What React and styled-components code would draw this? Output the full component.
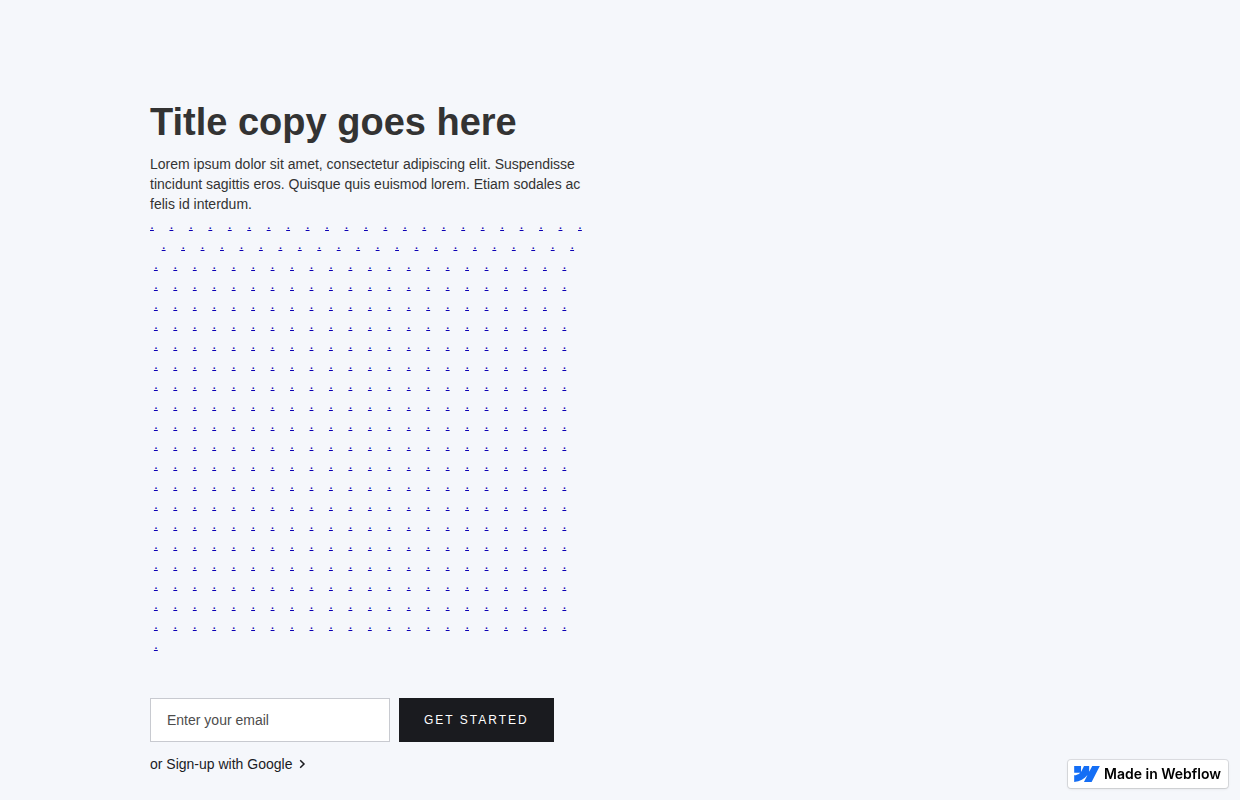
import React, { Fragment, useState } from "react";
import styled, { createGlobalStyle } from "styled-components";

const GlobalStyle = createGlobalStyle`
  * {
    box-sizing: border-box;
  }

  body {
    margin: 0;
    background-color: #f5f7fb;
    color: #333;
    font-family: "Liberation Sans", Arial, sans-serif;
    font-size: 14px;
    line-height: 20px;
  }
`;

const Section = styled.section`
  padding: 100px 24px 24px;
`;

const Container = styled.div`
  display: grid;
  grid-template-columns: 1fr 1fr;
  column-gap: 70px;
  max-width: 940px;
  margin: 0 auto;
`;

const Title = styled.h1`
  margin: 0 0 10px;
  font-size: 38px;
  line-height: 44px;
  font-weight: bold;
`;

const Copy = styled.p`
  margin: 0;
`;

const Dots = styled.div`
  margin-bottom: 44px;
`;

const DotLink = styled.a`
  color: #0c00b4;
  text-decoration: underline;
`;

const SignupForm = styled.form`
  display: flex;
  align-items: stretch;
  gap: 9px;
  margin-bottom: 12px;
`;

const EmailInput = styled.input`
  width: 240px;
  height: 44px;
  padding: 8px 16px;
  border: 1px solid #c8cad0;
  border-radius: 0;
  background-color: #fff;
  color: #333;
  font: inherit;

  &::placeholder {
    color: #4d4d4d;
    opacity: 1;
  }
`;

const SubmitButton = styled.button`
  padding: 11px 24px;
  border: 1px solid #1a1b1f;
  background-color: #1a1b1f;
  color: #fff;
  font-family: inherit;
  font-size: 12px;
  line-height: 20px;
  letter-spacing: 2px;
  text-transform: uppercase;
  white-space: nowrap;
  cursor: pointer;
`;

const GoogleLink = styled.a`
  display: inline-flex;
  align-items: center;
  gap: 6px;
  color: #1a1b1f;
  text-decoration: none;
`;

const Badge = styled.a`
  position: fixed;
  right: 12px;
  bottom: 12px;
  display: flex;
  align-items: center;
  gap: 4px;
  height: 28px;
  padding: 6px 7px 6px 6px;
  border-radius: 3px;
  background-color: #fff;
  box-shadow: 0 0 0 1px rgba(0, 0, 0, 0.1), 0 1px 3px rgba(0, 0, 0, 0.1);
  color: #000;
  font-family: Inter, sans-serif;
  font-size: 14px;
  line-height: 16px;
  font-weight: 600;
  text-decoration: none;
  white-space: nowrap;
`;

const dots = Array.from({ length: 464 }, (_, i) => i);

const Chevron = () => (
  <svg width="8" height="10" viewBox="0 0 8 10" fill="none" aria-hidden="true">
    <path d="M2.2 1.2L6 5L2.2 8.8" stroke="#1a1b1f" strokeWidth="1.5" />
  </svg>
);

const WebflowLogo = () => (
  <svg width="26" height="16" viewBox="0 0 1080 674" aria-hidden="true">
    <path
      fill="#146ef5"
      fillRule="evenodd"
      d="M1080 0L735.386 673.684H411.695L555.916 394.481H549.445C430.464 548.934 252.942 650.61 0 673.684V398.344C0 398.344 161.813 388.787 256.938 288.776H0V0H288.771V237.515L295.252 237.489L413.254 0H631.644V236.009L638.126 235.999L760.555 0H1080Z"
    />
  </svg>
);

const App = () => {
  const [email, setEmail] = useState("");

  return (
    <>
      <GlobalStyle />
      <Section>
        <Container>
          <div>
            <Title>Title copy goes here</Title>
            <Copy>
              Lorem ipsum dolor sit amet, consectetur adipiscing elit.
              Suspendisse tincidunt sagittis eros. Quisque quis euismod lorem.
              Etiam sodales ac felis id interdum.
            </Copy>
            <Dots>
              {dots.map((dot) => (
                <Fragment key={dot}>
                  <DotLink href="#">.</DotLink>
                  {" \u00a0 \u00a0"}
                </Fragment>
              ))}
            </Dots>
            <SignupForm onSubmit={(e) => e.preventDefault()}>
              <EmailInput
                type="email"
                name="email"
                aria-label="Enter your email"
                placeholder="Enter your email"
                value={email}
                onChange={(e) => setEmail(e.target.value)}
              />
              <SubmitButton type="submit">Get started</SubmitButton>
            </SignupForm>
            <GoogleLink href="#">
              or Sign-up with Google
              <Chevron />
            </GoogleLink>
          </div>
        </Container>
      </Section>
      <Badge href="#">
        <WebflowLogo />
        Made in Webflow
      </Badge>
    </>
  );
};

export default App;
